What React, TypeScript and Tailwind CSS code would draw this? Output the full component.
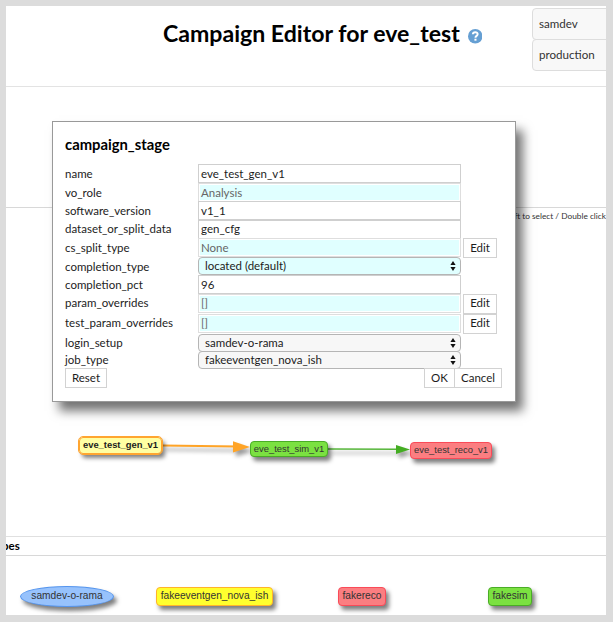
import React from "react";

type Field = {
  label: string;
  value: string;
  kind: "input" | "muted" | "select";
  row: string;
  edit?: boolean;
  tint?: string;
};

const fields: Field[] = [
  { label: "name", value: "eve_test_gen_v1", kind: "input", row: "h-[19px]" },
  { label: "vo_role", value: "Analysis", kind: "muted", row: "h-[18px]" },
  { label: "software_version", value: "v1_1", kind: "input", row: "h-[18.5px]" },
  { label: "dataset_or_split_data", value: "gen_cfg", kind: "input", row: "h-[18.5px]" },
  { label: "cs_split_type", value: "None", kind: "muted", row: "h-[19px]", edit: true },
  { label: "completion_type", value: "located (default)", kind: "select", row: "h-[18px]", tint: "bg-[#e0ffff]" },
  { label: "completion_pct", value: "96", kind: "input", row: "h-[18.5px]" },
  { label: "param_overrides", value: "[]", kind: "muted", row: "h-5", edit: true },
  { label: "test_param_overrides", value: "[]", kind: "muted", row: "h-5", edit: true },
  { label: "login_setup", value: "samdev-o-rama", kind: "select", row: "h-[17px]", tint: "bg-[#f7f7f7]" },
  { label: "job_type", value: "fakeeventgen_nova_ish", kind: "select", row: "h-[17.5px]", tint: "bg-[#f7f7f7]" },
];

function Control({ field }: { field: Field }) {
  if (field.kind === "select") {
    return (
      <div className={`flex h-[18px] w-[263px] items-center justify-between rounded-[4px] border border-[#b5b5b5] pl-1.5 pr-1 ${field.tint}`}>
        <span>{field.value}</span>
        <svg width="6" height="10" viewBox="0 0 6 10" fill="#111">
          <path d="M3 0 5.6 4H.4zM3 10 5.6 6H.4z" />
        </svg>
      </div>
    );
  }
  if (field.kind === "muted") {
    return (
      <div className="h-[19px] w-[263px] border border-[#dedede] bg-white p-px text-[#666]">
        <div className="flex h-full items-center bg-[#e0ffff] pl-px">{field.value}</div>
      </div>
    );
  }
  return (
    <div className="flex h-[19px] w-[263px] items-center border border-[#cfcfcf] bg-white pl-0.5">{field.value}</div>
  );
}

function Button({ children, className }: { children: string; className: string }) {
  return (
    <button className={`flex h-5 shrink-0 items-center justify-center border border-[#d2d2d2] bg-white pb-px text-[11.5px] ${className}`}>
      {children}
    </button>
  );
}

function StageDialog() {
  return (
    <section className="absolute left-[46px] top-[115px] h-[281px] w-[464px] border border-[#999] bg-white pl-3 pt-[13px] text-[11.5px] leading-none shadow-[7px_9px_10px_rgba(0,0,0,0.55)]">
      <h2 className="h-[29px] text-[14.8px] font-bold leading-[18px] text-black">campaign_stage</h2>
      <div>
        {fields.map((field) => (
          <div key={field.label} className={`flex ${field.row}`}>
            <label className="flex h-[19px] w-[133px] items-center">{field.label}</label>
            <Control field={field} />
            {field.edit && <Button className="ml-0.5 w-[34px]">Edit</Button>}
          </div>
        ))}
      </div>
      <div className="flex w-[437px]">
        <Button className="w-[42px]">Reset</Button>
        <Button className="ml-auto w-[31px]">OK</Button>
        <Button className="-ml-px w-12">Cancel</Button>
      </div>
    </section>
  );
}

type NodeProps = { label: string; place: string; look: string };

function Node({ label, place, look }: NodeProps) {
  return (
    <div className={`absolute flex items-center justify-center whitespace-nowrap border pb-px font-['Liberation_Sans',sans-serif] leading-none shadow-[3px_4px_4px_rgba(0,0,0,0.5)] ${place} ${look}`}>
      {label}
    </div>
  );
}

const nodes: NodeProps[] = [
  { label: "eve_test_gen_v1", place: "left-[73px] top-[431px] h-[17px] w-[83px]", look: "rounded-[4px] outline outline-[0.5px] outline-[#ffa530] border-[#ffa530] bg-[#ffffa3] text-[9.4px] font-bold" },
  { label: "eve_test_sim_v1", place: "left-[244px] top-[435px] h-[16px] w-[78px]", look: "rounded-[4px] border-[#4aad26] bg-[#7be141] text-[9.4px] text-[#333]" },
  { label: "eve_test_reco_v1", place: "left-[404px] top-[436px] h-[17px] w-[82px]", look: "rounded-[4px] border-[#fa4a58] bg-[#fb7e81] text-[9.4px] text-[#333]" },
  { label: "samdev-o-rama", place: "left-[14px] top-[580px] h-[21px] w-[94px]", look: "rounded-[50%] border-[#5595ee] bg-[#97c2fc] text-[10.2px] text-[#333]" },
  { label: "fakeeventgen_nova_ish", place: "left-[150px] top-[581px] h-[19px] w-[117px]", look: "rounded-[4px] border-[#ffb32a] bg-[#ffff2e] text-[10.2px] text-[#333]" },
  { label: "fakereco", place: "left-[332px] top-[581px] h-[19px] w-[48px]", look: "rounded-[4px] border-[#fa4a58] bg-[#fb7e81] text-[10.2px] text-[#333]" },
  { label: "fakesim", place: "left-[482px] top-[581px] h-[19px] w-[44px]", look: "rounded-[4px] border-[#4aad26] bg-[#7be141] text-[10.2px] text-[#333]" },
];

export default function App() {
  return (
    <main className="h-[622px] w-[613px] bg-[#dcdcdc] pl-1.5 pt-1.5 font-['Lato',sans-serif] text-[#1c1c1c]">
      <div className="relative h-[609px] w-[600px] overflow-hidden bg-white">
        <header className="flex h-[81px] items-start border-b border-[#e3e3e3]">
          <h1 className="ml-[157px] mt-[13px] whitespace-nowrap text-[23.1px] font-bold leading-7 text-black">Campaign Editor for eve_test</h1>
          <svg className="ml-2 mt-[23px] shrink-0" width="14.500" height="14.500" viewBox="0 0 14 14">
            <circle cx="7" cy="7" r="7" fill="#659fd3" />
            <path d="M4.7 5.1C4.8 2.4 9.5 2.5 9.3 5.1 9.2 6.7 7.2 6.6 7.2 8.4" fill="none" stroke="#fff" strokeWidth="1.9" />
            <path d="M6.2 9.4h2v1.9h-2z" fill="#fff" />
          </svg>
          <div className="-mr-2 ml-auto mt-0.5 w-[82px] shrink-0 text-[11.6px] text-[#333]">
            <div className="flex h-8 items-center rounded-[4px] border border-[#ddd] bg-[#f8f8f8] pl-1.5">samdev</div>
            <div className="-mt-px flex h-8 items-center rounded-[4px] border border-[#ddd] bg-[#f8f8f8] pl-1.5">production</div>
          </div>
        </header>
        <div className="h-[121px] border-b border-[#d8d8d8]" />
        <div className="h-[329px] border-b border-[#e0e0e0] pt-[3px]">
          <p className="text-right text-[8.3px] leading-[11px] text-[#333]">Shift to select / Double click</p>
        </div>
        <h3 className="h-[19px] border-b border-[#d8d8d8] text-[11.5px] font-bold leading-[18px] text-black">
          <span className="-ml-[16px]">Types</span>
        </h3>

        <svg className="absolute left-0 top-[420px]" width="600" height="50" viewBox="6 426 600 50">
          <g className="[filter:drop-shadow(3px_4px_2px_rgba(0,0,0,0.4))]">
            <path d="M162 445.500 238 446.500" stroke="#ffa427" strokeWidth="2" />
            <path d="M250 447 233 441.300V452.500z" fill="#ffa427" />
            <path d="M328 449 398 449.300" stroke="#56b63a" strokeWidth="1.5" />
            <path d="M410 449.500 396 445V454z" fill="#44ad22" />
          </g>
        </svg>
        {nodes.map((node) => (
          <Node key={node.label} {...node} />
        ))}
        <StageDialog />
      </div>
    </main>
  );
}
